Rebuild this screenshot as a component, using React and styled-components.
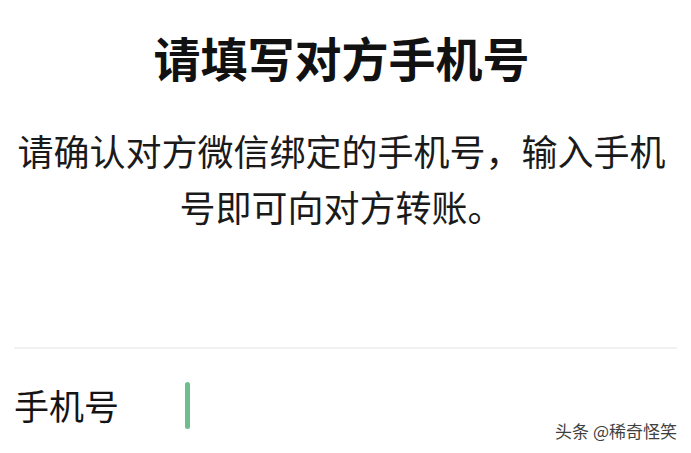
import React from "react";
import styled, { createGlobalStyle } from "styled-components";

const Global = createGlobalStyle`
  html, body {
    margin: 0;
    padding: 0;
    background: #ffffff;
  }
  body {
    font-family: "Noto Sans CJK SC", "Noto Sans", sans-serif;
    color: #111111;
  }
`;

const Page = styled.div`
  position: relative;
  width: 691px;
  height: 453px;
  overflow: hidden;
  box-sizing: border-box;
  padding: 0 14px;
  display: flex;
  flex-direction: column;
`;

const Title = styled.h1`
  margin: 25px 0 0;
  padding-right: 8px;
  font-size: 47px;
  line-height: 64px;
  font-weight: 700;
  text-align: center;
`;

const Desc = styled.p`
  margin: 33px 0 0;
  padding-right: 8px;
  font-size: 36px;
  line-height: 56px;
  font-weight: 400;
  text-align: center;
  color: #1a1a1a;
`;

const Divider = styled.div`
  margin-top: 113px;
  height: 2px;
  background: #f1f1f1;
`;

const Field = styled.div`
  display: flex;
  align-items: center;
  margin-top: 32px;
`;

const Label = styled.span`
  font-size: 35px;
  line-height: 48px;
  width: 171px;
  color: #141414;
`;

const Cursor = styled.span`
  display: block;
  width: 5px;
  height: 47px;
  border-radius: 3px;
  background: #6cbf8c;
`;

const Watermark = styled.div`
  position: absolute;
  right: 14px;
  bottom: 12px;
  font-size: 17px;
  line-height: 20px;
  color: #3f3f3f;
  text-shadow: 0 0 2px #ffffff, 0 0 1px #ffffff;
`;

export default function App() {
  return (
    <>
      <Global />
      <Page>
        <Title>请填写对方手机号</Title>
        <Desc>
          请确认对方微信绑定的手机号，输入手机
          <br />
          号即可向对方转账。
        </Desc>
        <Divider />
        <Field>
          <Label>手机号</Label>
          <Cursor />
        </Field>
        <Watermark>头条 @稀奇怪笑</Watermark>
      </Page>
    </>
  );
}
